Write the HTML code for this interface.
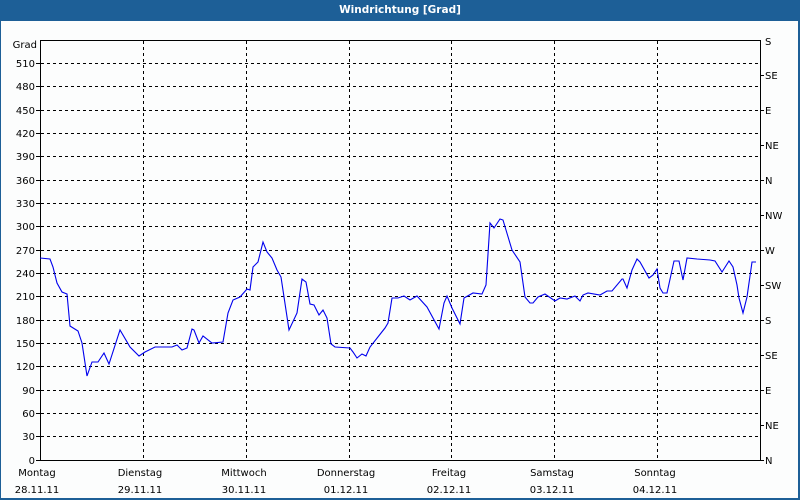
<!DOCTYPE html>
<html><head><meta charset="utf-8"><style>
html,body{margin:0;padding:0;width:800px;height:500px;overflow:hidden;background:#fcfdfd}
svg text{font-family:"DejaVu Sans","Liberation Sans",sans-serif;font-size:10px;fill:#000}
</style></head><body>
<svg width="800" height="500" xmlns="http://www.w3.org/2000/svg">
<rect x="0" y="0" width="800" height="500" fill="#1d5f97"/>
<rect x="1" y="21" width="797" height="477" fill="#fcfdfd"/>
<text x="400" y="13" text-anchor="middle" style="fill:#fff;font-weight:bold;font-size:10.5px">Windrichtung [Grad]</text>
<g stroke="#000" stroke-dasharray="3,3" stroke-width="1">
<path d="M41 63.5H760M41 86.5H760M41 110.5H760M41 133.5H760M41 156.5H760M41 180.5H760M41 203.5H760M41 226.5H760M41 250.5H760M41 273.5H760M41 296.5H760M41 320.5H760M41 343.5H760M41 366.5H760M41 390.5H760M41 413.5H760M41 436.5H760"/>
<path d="M143.5 41V460M246.5 41V460M349.5 41V460M451.5 41V460M554.5 41V460M657.5 41V460"/>
</g>
<path d="M40.5 40V460.5H760.5V40M40 40.5H761" stroke="#000" fill="none"/>
<g stroke="#000"><path d="M36 63.5H40M36 86.5H40M36 110.5H40M36 133.5H40M36 156.5H40M36 180.5H40M36 203.5H40M36 226.5H40M36 250.5H40M36 273.5H40M36 296.5H40M36 320.5H40M36 343.5H40M36 366.5H40M36 390.5H40M36 413.5H40M36 436.5H40M36 460.5H40"/>
<path d="M761 75.5H764M761 110.5H764M761 145.5H764M761 180.5H764M761 215.5H764M761 250.5H764M761 285.5H764M761 320.5H764M761 355.5H764M761 390.5H764M761 425.5H764M761 460.5H764"/></g>
<g text-anchor="end">
<text x="37" y="48">Grad</text>
<text x="35" y="67">510</text><text x="35" y="90">480</text><text x="35" y="114">450</text><text x="35" y="137">420</text><text x="35" y="160">390</text><text x="35" y="184">360</text><text x="35" y="207">330</text><text x="35" y="230">300</text><text x="35" y="254">270</text><text x="35" y="277">240</text><text x="35" y="300">210</text><text x="35" y="324">180</text><text x="35" y="347">150</text><text x="35" y="370">120</text><text x="35" y="394">90</text><text x="35" y="417">60</text><text x="35" y="440">30</text><text x="35" y="464">0</text>
</g>
<g>
<text x="765" y="45">S</text><text x="765" y="79">SE</text><text x="765" y="114">E</text><text x="765" y="149">NE</text><text x="765" y="184">N</text><text x="765" y="219">NW</text><text x="765" y="254">W</text><text x="765" y="289">SW</text><text x="765" y="324">S</text><text x="765" y="359">SE</text><text x="765" y="394">E</text><text x="765" y="429">NE</text><text x="765" y="464">N</text>
</g>
<g text-anchor="middle">
<text x="37" y="476">Montag</text><text x="37" y="493">28.11.11</text>
<text x="140" y="476">Dienstag</text><text x="140" y="493">29.11.11</text>
<text x="244" y="476">Mittwoch</text><text x="244" y="493">30.11.11</text>
<text x="346" y="476">Donnerstag</text><text x="346" y="493">01.12.11</text>
<text x="449" y="476">Freitag</text><text x="449" y="493">02.12.11</text>
<text x="552" y="476">Samstag</text><text x="552" y="493">03.12.11</text>
<text x="655" y="476">Sonntag</text><text x="655" y="493">04.12.11</text>
</g>
<polyline fill="none" stroke="#0000ee" stroke-width="1.1" points="40,258 50,259 53,267 57,283 62,292 67,294 70,326 78,331 82,343 87,376 92,362 98,362 104,353 109,364 120,330 130,347 139,356 145,352 155,347 172,347 177,345 182,350 187,348 192,329 194,330 199,343 203,336 212,343 223,342 228,313 233,300 240,297 247,289 250,290 253,267 258,262 263,242 267,252 272,258 277,270 281,277 289,330 297,313 302,279 306,282 310,304 314,305 319,315 323,310 327,318 331,344 335,347 350,348 353,352 357,358 362,354 366,356 370,347 385,328 388,323 392,298 398,298 404,296 410,300 417,296 427,307 439,329 444,303 447,296 452,308 460,324 464,298 473,293 482,294 486,285 490,223 494,228 500,219 503,220 512,250 520,262 525,297 530,303 533,303 538,297 545,294 555,301 560,298 567,299 575,296 580,301 583,295 588,293 600,295 607,291 612,291 622,279 623,279 627,288 632,270 637,259 640,262 649,278 653,275 657,269 660,288 663,293 667,293 674,261 679,261 683,280 687,258 697,259 710,260 715,261 722,272 729,261 733,267 737,285 739,298 743,313 747,297 752,262 756,262"/>
</svg>
</body></html>
